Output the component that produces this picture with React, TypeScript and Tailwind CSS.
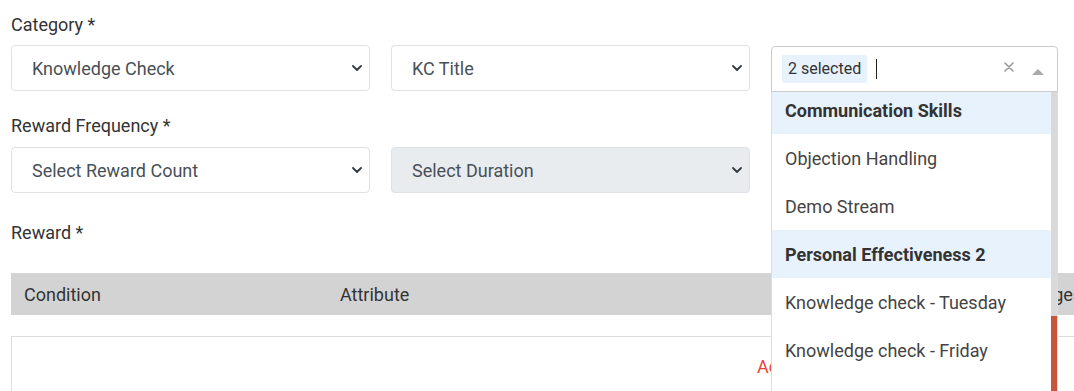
import React from "react";

function Chevron() {
  return (
    <svg width="10" height="6" viewBox="0 0 10 6" fill="none">
      <path d="M1 1L5 5L9 1" stroke="#343a40" strokeWidth="1.8" strokeLinecap="round" strokeLinejoin="round" />
    </svg>
  );
}

function Select({ text, disabled }: { text: string; disabled?: boolean }) {
  return (
    <div
      className={
        disabled
          ? "flex h-[46px] w-[359px] shrink-0 items-center justify-between rounded-[4px] border border-[#dee2e6] bg-[#e9ecef] pl-[20px] pr-[7px] text-[18px] text-[#495057]"
          : "flex h-[46px] w-[359px] shrink-0 items-center justify-between rounded-[4px] border border-[#dee2e6] bg-white pl-[20px] pr-[7px] text-[18px] text-[#495057]"
      }
    >
      <span>{text}</span>
      <Chevron />
    </div>
  );
}

function Option({ text, selected }: { text: string; selected?: boolean }) {
  return (
    <div
      className={
        selected
          ? "flex h-[48px] items-center bg-[#e8f2fd] pl-[13px] text-[18px] font-bold text-[#333]"
          : "flex h-[48px] items-center pl-[13px] text-[18px] text-[#444]"
      }
    >
      {text}
    </div>
  );
}

function MultiSelect() {
  return (
    <div className="relative w-[287px] shrink-0">
      <div className="mt-px flex h-[46px] items-center rounded-t-[4px] border border-[#ccc] bg-white pl-[10px] pr-[13px]">
        <div className="flex h-[28px] items-center rounded-[2px] bg-[#e8f2fd] px-[6px] text-[16px] text-[#333]">
          2 selected
        </div>
        <div className="ml-[9px] h-[20px] w-px bg-[#222]" />
        <div className="flex-1" />
        <svg className="-mt-[4px]" width="10" height="10" viewBox="0 0 10 10" fill="none">
          <path d="M1 1L9 9M9 1L1 9" stroke="#999" strokeWidth="1.6" strokeLinecap="round" />
        </svg>
        <svg className="ml-[18px] mt-[5px]" width="12" height="6" viewBox="0 0 12 6">
          <path d="M0 6L6 0L12 6Z" fill="#aaa" />
        </svg>
      </div>
      <div className="absolute left-0 top-[47px] z-10 flex h-[320px] w-[287px] border-x border-[#ddd] bg-white">
        <div className="flex-1 overflow-hidden">
          <div className="-mt-[6px]">
            <Option text="Communication Skills" selected />
            <Option text="Objection Handling" />
            <Option text="Demo Stream" />
            <Option text="Personal Effectiveness 2" selected />
            <Option text="Knowledge check - Tuesday" />
            <Option text="Knowledge check - Friday" />
            <Option text="Knowledge check - Monday" />
          </div>
        </div>
        <div className="flex w-[6px] flex-col">
          <div className="h-[224px] bg-[#d9d9d9]" />
          <div className="flex-1 bg-[#c9553d]" />
        </div>
      </div>
    </div>
  );
}

export default function App() {
  return (
    <div className="h-[391px] w-[1074px] overflow-hidden bg-white font-[Roboto,sans-serif]">
      <div className="w-[1400px] pl-[11px]">
        <div className="pt-[13px] text-[18px] leading-6 text-[#333]">Category *</div>
        <div className="mt-[8px] flex gap-[21px]">
          <Select text="Knowledge Check" />
          <Select text="KC Title" />
          <MultiSelect />
        </div>
        <div className="mt-[22px] text-[18px] leading-6 text-[#333]">Reward Frequency *</div>
        <div className="mt-[9px] flex gap-[21px]">
          <Select text="Select Reward Count" />
          <Select text="Select Duration" disabled />
        </div>
        <div className="mt-[28px] text-[18px] leading-6 text-[#333]">Reward *</div>
        <div className="mt-[28px] flex h-[42px] items-center bg-[#d3d3d3] text-[18px] text-[#333]">
          <div className="w-[316px] pl-[13px]">Condition</div>
          <div className="w-[450px] pl-[13px]">Attribute</div>
          <div className="w-[241px]" />
          <div className="w-[300px] pl-[4px]">Badges</div>
        </div>
        <div className="mt-[21px] h-[120px] border border-[#ddd] pl-[745px] pt-[18px] text-[18px] leading-6 text-[#e8453c]">
          Add Condition
        </div>
      </div>
    </div>
  );
}
